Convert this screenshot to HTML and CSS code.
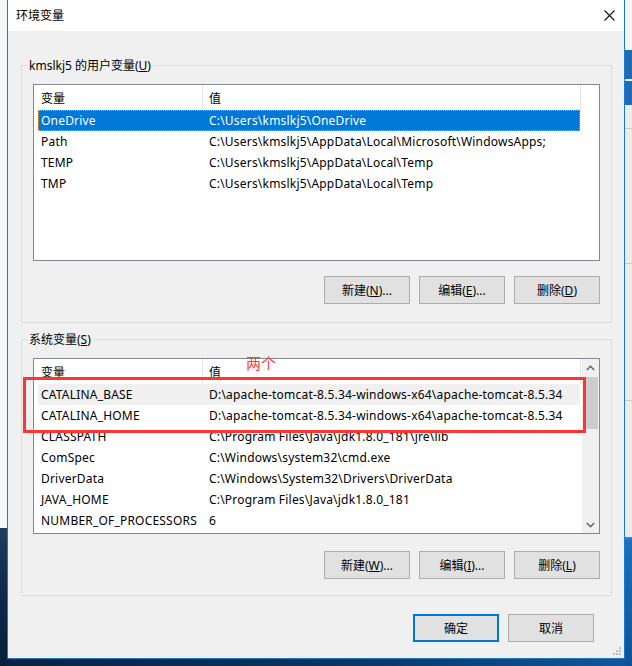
FILE: index.html
```html
<!DOCTYPE html>
<html lang="zh-CN">
<head>
<meta charset="utf-8">
<title>环境变量</title>
<link rel="stylesheet" href="styles.css">
</head>
<body>
<div class="side side-left"></div>
<div class="window">
  <div class="titlebar">
    <span class="title">环境变量</span>
    <svg class="close" width="11" height="11" viewBox="0 0 11 11"><path d="M0.5 0.5 L10.5 10.5 M10.5 0.5 L0.5 10.5" stroke="#111" stroke-width="1.1" fill="none"/></svg>
  </div>

  <div class="group">
    <div class="legend">kmslkj5 的用户变量(<u>U</u>)</div>
    <div class="list list-user">
      <div class="list-main">
        <div class="header"><div class="hcell c1">变量</div><div class="hcell c2">值</div></div>
        <div class="row selected"><div class="cell c1">OneDrive</div><div class="cell c2">C:\Users\kmslkj5\OneDrive</div></div>
        <div class="row"><div class="cell c1">Path</div><div class="cell c2">C:\Users\kmslkj5\AppData\Local\Microsoft\WindowsApps;</div></div>
        <div class="row"><div class="cell c1">TEMP</div><div class="cell c2">C:\Users\kmslkj5\AppData\Local\Temp</div></div>
        <div class="row"><div class="cell c1">TMP</div><div class="cell c2">C:\Users\kmslkj5\AppData\Local\Temp</div></div>
      </div>
    </div>
    <div class="btnrow">
      <div class="btn">新建(<u>N</u>)...</div>
      <div class="btn">编辑(<u>E</u>)...</div>
      <div class="btn">删除(<u>D</u>)</div>
    </div>
  </div>

  <div class="group group2">
    <div class="legend">系统变量(<u>S</u>)</div>
    <div class="list list-sys">
      <div class="list-main">
        <div class="header"><div class="hcell c1">变量</div><div class="hcell c2">值</div></div>
        <div class="row hover"><div class="cell c1">CATALINA_BASE</div><div class="cell c2">D:\apache-tomcat-8.5.34-windows-x64\apache-tomcat-8.5.34</div></div>
        <div class="row"><div class="cell c1">CATALINA_HOME</div><div class="cell c2">D:\apache-tomcat-8.5.34-windows-x64\apache-tomcat-8.5.34</div></div>
        <div class="row"><div class="cell c1">CLASSPATH</div><div class="cell c2">C:\Program Files\Java\jdk1.8.0_181\jre\lib</div></div>
        <div class="row"><div class="cell c1">ComSpec</div><div class="cell c2">C:\Windows\system32\cmd.exe</div></div>
        <div class="row"><div class="cell c1">DriverData</div><div class="cell c2">C:\Windows\System32\Drivers\DriverData</div></div>
        <div class="row"><div class="cell c1">JAVA_HOME</div><div class="cell c2">C:\Program Files\Java\jdk1.8.0_181</div></div>
        <div class="row"><div class="cell c1">NUMBER_OF_PROCESSORS</div><div class="cell c2">6</div></div>
      </div>
      <div class="scrollbar">
        <div class="arrow"><svg width="9" height="6" viewBox="0 0 9 6"><path d="M0.8 5 L4.5 1.3 L8.2 5" stroke="#606060" stroke-width="1.4" fill="none"/></svg></div>
        <div class="track"><div class="thumb"></div></div>
        <div class="arrow"><svg width="9" height="6" viewBox="0 0 9 6"><path d="M0.8 1 L4.5 4.7 L8.2 1" stroke="#606060" stroke-width="1.4" fill="none"/></svg></div>
      </div>
    </div>
    <div class="btnrow btnrow2">
      <div class="btn">新建(<u>W</u>)...</div>
      <div class="btn">编辑(<u>I</u>)...</div>
      <div class="btn">删除(<u>L</u>)</div>
    </div>
  </div>

  <div class="footer">
    <div class="btn btn-default">确定</div>
    <div class="btn">取消</div>
  </div>

  <svg class="grip" width="9" height="9" viewBox="0 0 9 9">
    <rect x="7" y="1" width="2" height="2" fill="#bcbcbc"/>
    <rect x="4" y="4" width="2" height="2" fill="#bcbcbc"/>
    <rect x="7" y="4" width="2" height="2" fill="#bcbcbc"/>
    <rect x="1" y="7" width="2" height="2" fill="#bcbcbc"/>
    <rect x="4" y="7" width="2" height="2" fill="#bcbcbc"/>
    <rect x="7" y="7" width="2" height="2" fill="#bcbcbc"/>
  </svg>

  <div class="annot-box"></div>
  <div class="annot-text">两个</div>
</div>
<div class="side side-right"></div>
</body>
</html>
```

FILE: styles.css
```css
html, body {
  margin: 0;
  padding: 0;
}

body {
  width: 632px;
  height: 666px;
  overflow: hidden;
  display: flex;
  align-items: flex-start;
  background: linear-gradient(to right, #0a223f 0%, #0d3560 55%, #13569a 100%);
  font-family: "Noto Sans", "Noto Sans CJK SC", sans-serif;
  font-size: 12px;
  color: #000;
}

.side {
  width: 7px;
  height: 666px;
  flex: none;
}

.side-left {
  background: linear-gradient(to bottom,
    #f5f6f7 0, #f5f6f7 528px,
    #1c3c5e 528px, #0e2a4a 590px, #0a1f39 666px);
}

.side-right {
  background: linear-gradient(to bottom,
    #f6f6f6 0, #f6f6f6 50px,
    #1f6bb5 50px, #1f6bb5 79px,
    #e6eef6 79px, #e6eef6 81px,
    #1f6bb5 81px, #1f6bb5 105px,
    #ececec 105px, #ececec 128px,
    #cfcfcf 128px, #cfcfcf 129px,
    #ececec 129px, #ececec 263px,
    #cfcfcf 263px, #cfcfcf 264px,
    #ececec 264px, #ececec 400px,
    #cfcfcf 400px, #cfcfcf 401px,
    #ececec 401px, #ececec 537px,
    #3d86cb 537px, #1a6fc0 541px, #0f5396 666px);
}

.window {
  position: relative;
  flex: none;
  width: 618px;
  height: 659px;
  box-sizing: border-box;
  border: 1px solid #1a7ad0;
  border-top: none;
  background: #f0f0f0;
  display: flex;
  flex-direction: column;
}

.titlebar {
  height: 31px;
  flex: none;
  background: #fff;
  display: flex;
  align-items: center;
  justify-content: space-between;
  padding: 0 9px 0 8px;
}

.title {
  line-height: 16px;
}

.close {
  display: block;
}

.group {
  margin: 34px 12px 0 13px;
  border: 1px solid #dcdcdc;
  padding: 0 11px 18px;
}

.group2 {
  margin-top: 16px;
  padding-bottom: 16px;
}

.legend {
  width: fit-content;
  margin: -8px 0 0 -6px;
  padding: 0 2px;
  line-height: 16px;
  background: #f0f0f0;
}

.list {
  margin-top: 10px;
  border: 1px solid #828790;
  background: #fff;
  box-sizing: border-box;
  display: flex;
}

.list-user {
  height: 177px;
}

.list-sys {
  height: 176px;
}

.list-main {
  flex: 1;
}

.header {
  display: flex;
  height: 25px;
  width: 547px;
  box-sizing: border-box;
  border-right: 1px solid #e5e5e5;
}

.hcell {
  display: flex;
  align-items: center;
  box-sizing: border-box;
  white-space: nowrap;
}

.hcell.c1 {
  width: 169px;
  padding-left: 7px;
  border-right: 1px solid #e5e5e5;
}

.hcell.c2 {
  padding-left: 6px;
}

.row {
  display: flex;
  align-items: center;
  height: 21px;
  width: 542px;
  margin-left: 4px;
  box-sizing: border-box;
  white-space: nowrap;
}

.cell {
  letter-spacing: 0.2px;
}

.cell.c1 {
  width: 164px;
  padding-left: 3px;
  box-sizing: border-box;
  overflow: hidden;
}

.cell.c2 {
  padding-left: 7px;
}

.row.selected {
  background: #0078d7;
  color: #fff;
  outline: 1px dotted #f0a050;
  outline-offset: -1px;
}

.row.hover {
  background: #f0f0f0;
}

.scrollbar {
  width: 17px;
  flex: none;
  background: #f0f0f0;
  display: flex;
  flex-direction: column;
}

.arrow {
  height: 17px;
  flex: none;
  display: flex;
  align-items: center;
  justify-content: center;
}

.track {
  flex: 1;
  padding: 1px 1px 0;
}

.thumb {
  height: 52px;
  background: #cdcdcd;
}

.btnrow {
  display: flex;
  justify-content: flex-end;
  gap: 9px;
  margin-top: 15px;
}

.btnrow2 {
  margin-top: 17px;
}

.btn {
  width: 86px;
  height: 28px;
  box-sizing: border-box;
  border: 1px solid #adadad;
  background: #e1e1e1;
  display: flex;
  align-items: center;
  justify-content: center;
  white-space: nowrap;
}

.btn-default {
  border-color: #0078d7;
  box-shadow: inset 0 0 0 1px #0078d7;
}

.footer {
  display: flex;
  justify-content: flex-end;
  gap: 9px;
  margin-top: 18px;
  padding-right: 30px;
}

.grip {
  position: absolute;
  right: 3px;
  bottom: 3px;
}

.annot-box {
  position: absolute;
  left: 15px;
  top: 377px;
  width: 563px;
  height: 56px;
  box-sizing: border-box;
  border: 3px solid #ff3434;
}

.annot-text {
  position: absolute;
  left: 238px;
  top: 353px;
  font-family: "Noto Sans CJK SC", sans-serif;
  font-size: 15px;
  line-height: 20px;
  color: #ff3b3b;
}
```
